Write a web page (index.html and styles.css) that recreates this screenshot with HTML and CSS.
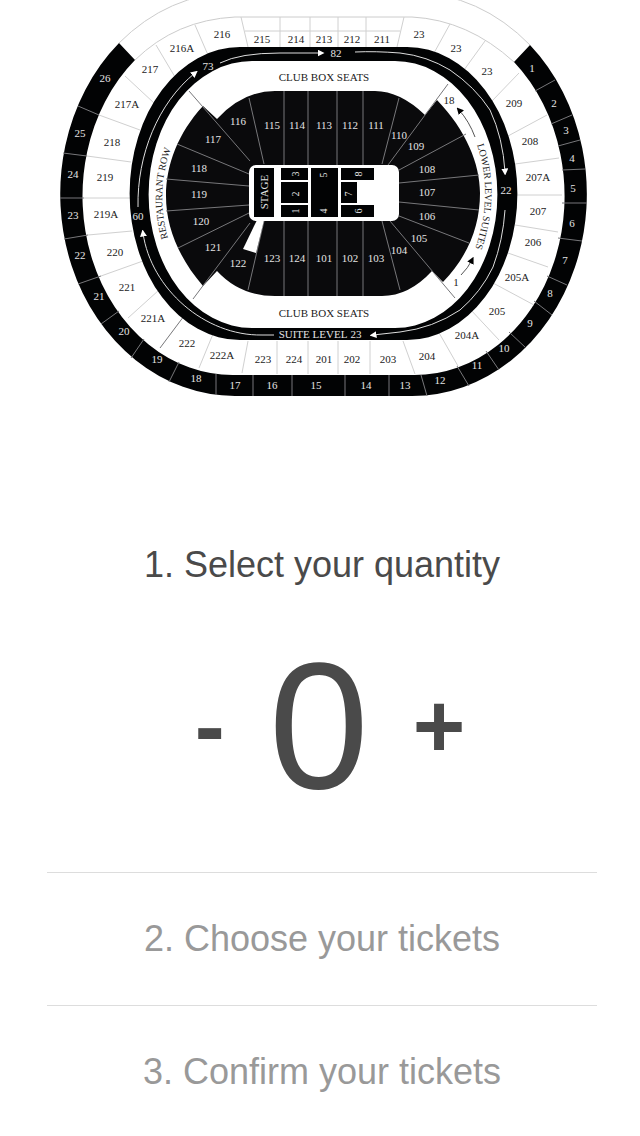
FILE: index.html
```html
<!DOCTYPE html>
<html lang="en">
<head>
<meta charset="utf-8">
<meta name="viewport" content="width=device-width, initial-scale=1">
<title>Select tickets</title>
<link rel="stylesheet" href="styles.css">
</head>
<body>
<main>
  <svg class="map" viewBox="0 0 640 400" role="img" aria-label="Arena seating map">
    <defs>
      <marker id="tip" class="tip" viewBox="0 0 8 8" refX="4" refY="4" markerWidth="7" markerHeight="7" markerUnits="userSpaceOnUse" orient="auto"><path d="M0 0L8 4L0 8Z"/></marker>
      <marker id="tip-dark" viewBox="0 0 8 8" refX="4" refY="4" markerWidth="7" markerHeight="7" markerUnits="userSpaceOnUse" orient="auto"><path d="M0 0L8 4L0 8Z"/></marker>
      <path id="row-path" d="M170 244Q153 194 173 143"/>
      <path id="suite-path" d="M475 139Q496 195 473 254"/>
    </defs>

    <!-- upper level -->
    <path class="outline" d="M119 43Q168 -6 235 -8H412Q480 -6 530 45"/>
    <path class="solid" d="M119 43A175 202 0 0 0 235 396H412A175 202 0 0 0 530 45L514 62A150 179 0 0 1 412 375H235A150 179 0 0 1 135 60Z"/>
    <path class="outline" d="M135 60Q176 20 235 17H412Q468 20 514 62"/>
    <path class="line" d="M99 115L78 106M87 156L63 153M84 198H60M88 235L64 239M101 276L78 284M119 311L101 324M144 339L131 358M179 362L169 382M216 374V395M253 375V396M292 375V396M345 375V396M389 375V396M421 375L427 396M457 366L469 386M486 351L499 370M509 332L526 348M534 301L552 315M547 276L567 285M558 238L582 241M562 203H587M562 170L585 169M558 146L580 140M551 124L572 115M535 91L555 80"/>

    <!-- 200 level -->
    <path class="line pale" d="M156 45L175 77M195 25L208 55M125 76L154 103M99 115L140 130M87 156L131 162M84 198H130M88 235L132 231M101 276L143 261M128 318L159 290M199 368L213 334M242 373L248 341M277 341V374M308 341V374M338 341V374M370 341V374M403 341L415 374M438 331L458 366M470 309L499 340M493 283L534 305M508 253L548 267M515 225L558 232M517 195H562M515 164L559 158M508 136L547 115M492 101L519 73M464 70L485 41M434 53L450 24M397 47L404 17M241 17L248 47M280 17V47M310 17V47M338 17V47M366 17V47M245 31H400"/>
    <path class="line" d="M160 348L184 316"/>

    <!-- suite ring -->
    <path class="solid" fill-rule="evenodd" d="M240 47H407A110 146 0 0 1 407 340H240A110 146 0 0 1 240 47ZM252 61A103 133 0 0 0 252 328H395A102 133 0 0 0 395 61Z"/>
    <path class="track" marker-end="url(#tip)" d="M138 207C137 155 158 103 195 73"/>
    <path class="track" marker-end="url(#tip)" d="M220 63Q240 53 280 53H321"/>
    <path class="track" marker-end="url(#tip)" d="M355 52Q375 51 400 53Q427 56 450 70Q475 87 490 110Q503 138 505 172"/>
    <path class="track" marker-end="url(#tip)" d="M505 210Q503 240 493 267Q481 292 460 310Q433 328 400 332L373 335"/>
    <path class="track" marker-end="url(#tip)" d="M274 335H262C205 336 151 289 143 233"/>

    <!-- lower bowl -->
    <path class="bowl" d="M203 106L217 119Q243 91 275 91H375Q400 91 425 115L437 100C466 130 480 164 480 193C480 225 469 255 443 282L432 271Q409 296 382 296H275Q240 296 217 271L203 286C178 257 166 226 166 196C166 165 178 133 203 106Z"/>
    <path class="line" d="M189 91L250 161M193 299L250 223M448 84L388 165M455 298L390 221M249 98L264 164M284 91V165M308 91V165M337 91V165M363 91V165M399 98L382 164M466 134L399 170M479 175L399 183M479 210L399 202M469 243L399 216M400 290L382 221M248 290L264 221M284 221V296M308 221V296M337 221V296M363 221V296M177 144L249 174M166 179L249 186M166 211L249 205M178 248L249 213"/>
    <path class="floor" d="M257 220H264L256 253L243 249Z"/>
    <rect class="floor" x="249" y="165" width="150" height="56" rx="7"/>
    <path class="solid" d="M254 168h20v49h-20zM281 168h27v12h-27zM281 182h27v21h-27zM281 205h27v12h-27zM311 168h27v49h-27zM341 168h33v12h-33zM341 182h16v21h-16zM341 205h33v12h-33z"/>
    <g class="light">
      <text transform="translate(268 192) rotate(-90)">STAGE</text>
      <text class="small" transform="translate(299 174) rotate(-90)">3</text>
      <text class="small" transform="translate(299 194) rotate(-90)">2</text>
      <text class="small" transform="translate(299 211) rotate(-90)">1</text>
      <text class="small" transform="translate(327 175) rotate(-90)">5</text>
      <text class="small" transform="translate(327 211) rotate(-90)">4</text>
      <text class="small" transform="translate(362 174) rotate(-90)">8</text>
      <text class="small" transform="translate(352 194) rotate(-90)">7</text>
      <text class="small" transform="translate(362 211) rotate(-90)">6</text>

      <text x="238" y="125">116</text><text x="272" y="129">115</text><text x="297" y="129">114</text><text x="324" y="129">113</text><text x="350" y="129">112</text><text x="376" y="129">111</text><text x="399" y="139">110</text><text x="416" y="150">109</text>
      <text x="427" y="173">108</text><text x="427" y="196">107</text><text x="427" y="220">106</text><text x="419" y="242">105</text><text x="399" y="254">104</text>
      <text x="376" y="262">103</text><text x="350" y="262">102</text><text x="324" y="262">101</text><text x="297" y="262">124</text><text x="272" y="262">123</text><text x="238" y="267">122</text>
      <text x="213" y="251">121</text><text x="201" y="225">120</text><text x="199" y="198">119</text><text x="199" y="172">118</text><text x="213" y="143">117</text>

      <text x="208" y="70">73</text><text x="336" y="57">82</text><text x="506" y="194">22</text><text x="138" y="220">60</text><text x="313" y="338">SUITE LEVEL</text><text x="356" y="338">23</text>

      <text x="105" y="82">26</text><text x="80" y="137">25</text><text x="73" y="178">24</text><text x="73" y="219">23</text><text x="80" y="259">22</text><text x="99" y="300">21</text><text x="124" y="335">20</text><text x="157" y="363">19</text><text x="196" y="382">18</text><text x="235" y="389">17</text><text x="272" y="389">16</text><text x="316" y="389">15</text><text x="366" y="389">14</text><text x="405" y="389">13</text><text x="440" y="384">12</text><text x="477" y="369">11</text><text x="504" y="352">10</text><text x="530" y="327">9</text><text x="550" y="297">8</text><text x="565" y="264">7</text><text x="572" y="227">6</text><text x="573" y="192">5</text><text x="572" y="162">4</text><text x="566" y="134">3</text><text x="554" y="107">2</text><text x="532" y="72">1</text>
    </g>
    <g class="dark">
      <text x="324" y="81">CLUB BOX SEATS</text>
      <text x="324" y="317">CLUB BOX SEATS</text>
      <text class="small"><textPath href="#row-path" startOffset="50%">RESTAURANT ROW</textPath></text>
      <text class="small"><textPath href="#suite-path" startOffset="50%">LOWER LEVEL SUITES</textPath></text>
      <text x="449" y="104">18</text><text x="456" y="286">1</text>
      <text x="222" y="38">216</text><text x="182" y="52">216A</text><text x="150" y="73">217</text><text x="127" y="108">217A</text><text x="112" y="146">218</text><text x="105" y="181">219</text><text x="106" y="218">219A</text><text x="115" y="256">220</text><text x="127" y="291">221</text><text x="153" y="322">221A</text><text x="187" y="347">222</text><text x="222" y="359">222A</text>
      <text x="263" y="363">223</text><text x="294" y="363">224</text><text x="324" y="363">201</text><text x="352" y="363">202</text><text x="388" y="363">203</text><text x="427" y="360">204</text><text x="467" y="339">204A</text><text x="497" y="315">205</text><text x="517" y="281">205A</text><text x="533" y="246">206</text><text x="538" y="215">207</text><text x="538" y="181">207A</text><text x="530" y="145">208</text><text x="514" y="107">209</text><text x="487" y="75">23</text><text x="456" y="52">23</text><text x="419" y="38">23</text>
      <text x="262" y="43">215</text><text x="296" y="43">214</text><text x="324" y="43">213</text><text x="352" y="43">212</text><text x="382" y="43">211</text>
    </g>
    <path class="track dark-track" marker-end="url(#tip-dark)" d="M475 137Q469 121 459 110"/>
    <path class="track dark-track" marker-end="url(#tip-dark)" d="M461 275Q468 268 472 260"/>
  </svg>

  <section class="steps">
    <div class="step current">
      <h2>1. Select your quantity</h2>
      <div class="counter">
        <button type="button" aria-label="Decrease quantity">-</button>
        <output>0</output>
        <button type="button" aria-label="Increase quantity">+</button>
      </div>
    </div>
    <div class="step"><h2>2. Choose your tickets</h2></div>
    <div class="step"><h2>3. Confirm your tickets</h2></div>
  </section>
</main>
</body>
</html>
```
FILE: styles.css
```css
body {
  margin: 0;
  background: #fff;
  color: #4a4a4a;
  font-family: "Liberation Sans", Arial, sans-serif;
}

.map {
  display: block;
  width: 100%;
  font-family: "Liberation Serif", "Times New Roman", serif;
  font-size: 11px;
  text-anchor: middle;
}

.map .small { font-size: 10px; }
.solid { fill: #020304; }
.bowl { fill: #0a0a0c; }
.floor { fill: #fff; }
.light { fill: #e4e4e4; }
.dark { fill: #222; }
.tip { fill: #fff; }

.outline,
.line,
.track {
  fill: none;
  stroke-width: 1;
}

.outline { stroke: #ccc; }
.line { stroke: #77777a; }
.pale { stroke: #d0d0d0; }
.track { stroke: #ddd; }
.dark-track { stroke: #555; }

.steps {
  margin: 99px 43px 0 47px;
}

.step {
  padding: 44px 0;
  border-top: 1px solid #ddd;
  color: #999;
  text-align: center;
}

.step.current {
  padding-bottom: 56px;
  border-top: 0;
  color: #4a4a4a;
}

.step h2 {
  margin: 0;
  font-size: 36px;
  font-weight: 400;
  line-height: 44px;
}

.counter {
  display: flex;
  align-items: center;
  justify-content: center;
  gap: 44px;
  margin-top: 49px;
  padding-left: 16px;
}

.counter output {
  font-size: 180px;
  line-height: 180px;
}

.counter button {
  padding: 0;
  border: 0;
  background: none;
  color: inherit;
  font: bold 90px/100px "Liberation Sans", Arial, sans-serif;
  cursor: pointer;
}
```
